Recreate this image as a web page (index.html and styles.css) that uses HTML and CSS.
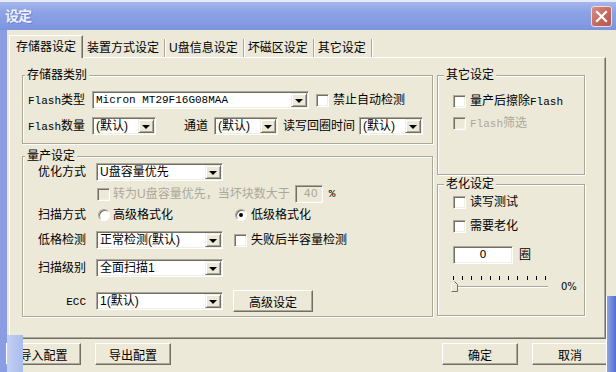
FILE: index.html
```html
<!DOCTYPE html>
<html>
<head>
<meta charset="utf-8">
<link rel="stylesheet" href="styles.css">
<title>设定</title>
</head>
<body>
<div class="titlebar">
    <span class="title">设定</span>
    <span class="close">
        <svg width="13" height="13" viewBox="0 0 13 13"><path d="M2 2 L11 11 M11 2 L2 11" stroke="#fff" stroke-width="2.2" stroke-linecap="square"/></svg>
    </span>
</div>
<div class="frame">
    <div class="tabs">
        <div class="tab active">存储器设定</div>
        <div class="tab">装置方式设定</div>
        <div class="tab">U盘信息设定</div>
        <div class="tab">坏磁区设定</div>
        <div class="tab">其它设定</div>
    </div>
    <div class="panel">
        <div class="col-left">
            <fieldset class="group g-type">
                <legend>存储器类别</legend>
                <div class="row">
                    <span class="lbl-a"><span class="lat">Flash</span>类型</span>
                    <div class="combo w-type"><span class="val lat">Micron MT29F16G08MAA</span><span class="drop"></span></div>
                    <span class="cb cb-gap"></span><span class="cb-text">禁止自动检测</span>
                </div>
                <div class="row row-2">
                    <span class="lbl-a"><span class="lat">Flash</span>数量</span>
                    <div class="combo w-s"><span class="val">(默认)</span><span class="drop"></span></div>
                    <span class="lbl-ch">通道</span>
                    <div class="combo w-s"><span class="val">(默认)</span><span class="drop"></span></div>
                    <span class="lbl-rw">读写回圈时间</span>
                    <div class="combo w-s"><span class="val">(默认)</span><span class="drop"></span></div>
                </div>
            </fieldset>
            <fieldset class="group g-mp">
                <legend>量产设定</legend>
                <div class="mp-grid">
                    <div class="row">
                        <span class="lbl-b">优化方式</span>
                        <div class="combo w-m"><span class="val">U盘容量优先</span><span class="drop"></span></div>
                    </div>
                    <div class="row sub">
                        <span class="cb off"></span>
                        <span class="dim conv">转为U盘容量优先，当坏块数大于</span>
                        <span class="field field-off">40</span>
                        <span class="pct">%</span>
                    </div>
                    <div class="row">
                        <span class="lbl-b">扫描方式</span>
                        <span class="radio r-first"></span><span class="cb-text r-text">高级格式化</span>
                        <span class="radio on r-second"></span><span class="cb-text">低级格式化</span>
                    </div>
                    <div class="row">
                        <span class="lbl-b">低格检测</span>
                        <div class="combo w-m"><span class="val">正常检测(默认)</span><span class="drop"></span></div>
                        <span class="cb cb-half"></span><span class="cb-text">失败后半容量检测</span>
                    </div>
                    <div class="row">
                        <span class="lbl-b">扫描级别</span>
                        <div class="combo w-m"><span class="val">全面扫描1</span><span class="drop"></span></div>
                    </div>
                    <div class="row">
                        <span class="lbl-b"><span class="lat">ECC</span></span>
                        <div class="combo w-m"><span class="val">1(默认)</span><span class="drop"></span></div>
                        <button class="btn btn-adv">高级设定</button>
                    </div>
                </div>
            </fieldset>
        </div>
        <div class="col-right">
            <fieldset class="group g-other">
                <legend>其它设定</legend>
                <div class="row">
                    <span class="cb"></span><span class="cb-text">量产后擦除<span class="lat">Flash</span></span>
                </div>
                <div class="row row-gap4">
                    <span class="cb off"></span><span class="cb-text dim"><span class="lat">Flash</span>筛选</span>
                </div>
            </fieldset>
            <fieldset class="group g-aging">
                <legend>老化设定</legend>
                <div class="row">
                    <span class="cb"></span><span class="cb-text">读写测试</span>
                </div>
                <div class="row row-gap6">
                    <span class="cb"></span><span class="cb-text">需要老化</span>
                </div>
                <div class="row row-loops">
                    <span class="field field-loops">0</span>
                    <span class="loops-unit">圈</span>
                </div>
                <div class="slider">
                    <div class="ticks">
                        <i></i><i></i><i></i><i></i><i></i><i></i><i></i><i></i><i></i><i></i><i></i>
                    </div>
                    <div class="slide-row">
                        <div class="track">
                            <svg class="thumb" width="7" height="11" viewBox="0 0 7 11">
                                <path d="M0.5 10.5 V3.5 L3.5 0.5 L6.5 3.5 V10.5 Z" fill="#ECE9D8" stroke="none"/>
                                <path d="M0.5 10.5 V3.5 L3.5 0.5" fill="none" stroke="#fff"/>
                                <path d="M3.5 0.5 L6.5 3.5 V10.5 H0.5" fill="none" stroke="#716F64"/>
                            </svg>
                        </div>
                        <span class="pct-value">0%</span>
                    </div>
                </div>
            </fieldset>
        </div>
    </div>
    <div class="footer">
        <button class="btn btn-foot btn-first">导入配置</button>
        <button class="btn btn-foot btn-gap">导出配置</button>
        <button class="btn btn-foot btn-ok">确定</button>
        <button class="btn btn-foot btn-gap">取消</button>
    </div>
</div>
<div class="shade-left"></div>
<div class="shade-right"></div>
</body>
</html>
```

FILE: styles.css
```css
body {
    margin: 0;
    width: 616px;
    height: 372px;
    overflow: hidden;
    position: relative;
    background: #ECE9D8;
    font-family: "Liberation Sans", "Noto Sans CJK SC", sans-serif;
    font-size: 12px;
    line-height: 14px;
    color: #000;
}

.lat {
    font-family: "Liberation Mono", monospace;
    font-size: 11px;
}

/* title bar */

.titlebar {
    height: 30px;
    box-sizing: border-box;
    display: flex;
    align-items: center;
    padding: 0 4px 0 5px;
    border-top: 2px solid #E6EBF8;
    background: linear-gradient(#A5B6EC, #8EA3E6 35%, #8399E2 80%, #7C93DE);
}

.title {
    color: #EEF2FC;
    font-size: 14px;
    font-weight: bold;
    letter-spacing: -1px;
    text-shadow: 1px 1px 0 #6C82CF;
}

.close {
    margin-left: auto;
    width: 21px;
    height: 21px;
    box-sizing: border-box;
    border: 1px solid #F3DCD8;
    border-radius: 3px;
    background: linear-gradient(135deg, #D88E84, #C2665C 60%, #B3574E);
    display: flex;
    align-items: center;
    justify-content: center;
}

/* client area */

.frame {
    border-left: 7px solid #8A9DE2;
    height: 342px;
    box-sizing: border-box;
    padding: 5px 0 0 2px;
}

.tabs {
    display: flex;
    align-items: flex-end;
    height: 22px;
}

.tab {
    height: 18px;
    line-height: 18px;
    padding: 0 5px 0 4px;
    border-right: 1px solid #ACA899;
    box-shadow: 1px 0 0 #fff;
}

.tab.active {
    position: relative;
    z-index: 1;
    height: 22px;
    line-height: 22px;
    margin-bottom: -1px;
    padding: 0 6px 0 6px;
    background: #ECE9D8;
    border-top: 1px solid #fff;
    border-left: 1px solid #fff;
    border-right: 1px solid #716F64;
    box-shadow: inset -1px 0 0 #ACA899;
}

.panel {
    width: 597px;
    height: 282px;
    box-sizing: border-box;
    display: flex;
    gap: 4px;
    padding: 10px 0 0 12px;
    border: 1px solid;
    border-color: #fff #716F64 #716F64 #fff;
    box-shadow: inset -1px -1px 0 #ACA899;
}

.col-left {
    width: 411px;
}

.col-right {
    width: 148px;
}

/* group boxes */

.group {
    margin: 0;
    border: 1px solid #ACA899;
    box-shadow: 1px 1px 0 #fff, inset 1px 1px 0 #fff;
    padding: 0 0 0 5px;
}

.group legend {
    padding: 0 2px;
    margin-left: -3px;
    line-height: 14px;
    background: #ECE9D8;
}

.g-type {
    padding-top: 9px;
    padding-bottom: 8px;
}

.g-mp {
    margin-top: 5px;
    padding-bottom: 4px;
}

.g-other,
.g-aging {
    padding-left: 15px;
}

.g-other legend,
.g-aging legend {
    margin-left: -9px;
}

.g-other {
    padding-top: 10px;
    padding-bottom: 42px;
}

.g-aging {
    margin-top: 2px;
    padding-top: 2px;
    padding-bottom: 22px;
}

.row {
    display: flex;
    align-items: center;
    height: 18px;
    white-space: nowrap;
}

.row-2 {
    margin-top: 8px;
}

.row-gap4 {
    margin-top: 4px;
}

.row-gap6 {
    margin-top: 6px;
}

.mp-grid {
    display: grid;
    grid-template-rows: 22px 21px 25px 28px 31px 22px;
    align-items: start;
}

.mp-grid .row:last-child {
    height: 22px;
}

.lbl-a {
    width: 64px;
}

.lbl-b {
    width: 58px;
    margin-right: 10px;
    text-align: right;
}

.lbl-ch {
    margin: 0 6px 0 28px;
}

.lbl-rw {
    margin: 0 4px 0 5px;
}

.dim {
    color: #ACA899;
}

/* combo boxes */

.combo {
    display: flex;
    align-items: center;
    height: 18px;
    box-sizing: border-box;
    background: #fff;
    border: 1px solid;
    border-color: #ACA899 #fff #fff #ACA899;
    box-shadow: inset 1px 1px 0 #716F64, inset -1px -1px 0 #F1EFE2;
    padding: 1px;
}

.combo .val {
    flex: 1;
    padding-left: 2px;
    overflow: hidden;
}

.drop {
    width: 16px;
    height: 14px;
    flex: none;
    box-sizing: border-box;
    background: #ECE9D8;
    border: 1px solid;
    border-color: #F1EFE2 #716F64 #716F64 #F1EFE2;
    box-shadow: inset 1px 1px 0 #fff, inset -1px -1px 0 #ACA899;
    display: flex;
    align-items: center;
    justify-content: center;
}

.drop::after {
    content: "";
    border-left: 4px solid transparent;
    border-right: 4px solid transparent;
    border-top: 4px solid #000;
    margin-top: 1px;
}

.w-type {
    width: 217px;
}

.w-s {
    width: 64px;
}

.w-m {
    width: 127px;
}

/* check boxes, radios, fields */

.cb {
    width: 13px;
    height: 13px;
    flex: none;
    box-sizing: border-box;
    background: #fff;
    border: 1px solid;
    border-color: #ACA899 #fff #fff #ACA899;
    box-shadow: inset 1px 1px 0 #716F64, inset -1px -1px 0 #F1EFE2;
}

.cb.off {
    background: #ECE9D8;
}

.cb-gap {
    margin-left: 7px;
}

.cb-text {
    margin-left: 4px;
}

.sub .cb {
    margin-left: 69px;
}

.conv {
    margin-left: 3px;
}

.field {
    height: 18px;
    box-sizing: border-box;
    background: #fff;
    border: 1px solid;
    border-color: #ACA899 #fff #fff #ACA899;
    box-shadow: inset 1px 1px 0 #716F64, inset -1px -1px 0 #F1EFE2;
    font-family: "DejaVu Sans", sans-serif;
    font-size: 11px;
    line-height: 16px;
}

.field-off {
    width: 28px;
    margin-left: 5px;
    background: #ECE9D8;
    color: #ACA899;
    text-align: right;
    padding-right: 4px;
}

.pct {
    margin-left: 6px;
    font-family: "Liberation Mono", monospace;
    font-size: 11px;
}

.radio {
    width: 12px;
    height: 12px;
    flex: none;
    box-sizing: border-box;
    border-radius: 50%;
    background: #fff;
    border: 1px solid;
    border-color: #ACA899 #fff #fff #ACA899;
    box-shadow: inset 1px 1px 0 #716F64;
    display: flex;
    align-items: center;
    justify-content: center;
}

.radio.on::after {
    content: "";
    width: 4px;
    height: 4px;
    border-radius: 50%;
    background: #000;
}

.r-first {
    margin-left: 2px;
}

.r-text {
    margin-left: 3px;
}

.r-second {
    margin-left: 62px;
}

.cb-half {
    margin-left: 11px;
}

.row-loops {
    margin-top: 11px;
}

.field-loops {
    width: 60px;
    text-align: center;
}

.loops-unit {
    margin-left: 6px;
}

/* slider */

.slider {
    margin-top: 12px;
    width: 125px;
}

.ticks {
    display: flex;
    justify-content: space-between;
    width: 93px;
    height: 4px;
}

.ticks i {
    width: 1px;
    height: 4px;
    background: #000;
}

.slide-row {
    display: flex;
    align-items: center;
    height: 12px;
    margin-top: 1px;
}

.track {
    position: relative;
    width: 95px;
    height: 2px;
    border-top: 1px solid #ACA899;
    border-bottom: 1px solid #fff;
    box-sizing: border-box;
    box-shadow: inset 0 1px 0 #716F64;
}

.thumb {
    position: absolute;
    left: -2px;
    top: -6px;
}

.pct-value {
    margin-left: 13px;
    font-family: "DejaVu Sans", sans-serif;
    font-size: 10px;
}

/* buttons */

.btn {
    height: 22px;
    box-sizing: border-box;
    padding: 0;
    font-family: "Noto Sans CJK SC", sans-serif;
    font-size: 12px;
    color: #000;
    background: #ECE9D8;
    border: 1px solid;
    border-color: #fff #716F64 #716F64 #fff;
    box-shadow: inset -1px -1px 0 #ACA899;
    border-radius: 0;
}

.btn-adv {
    width: 80px;
    margin-left: 10px;
}

.footer {
    display: flex;
    margin-top: 4px;
    padding-right: 8px;
}

.btn-foot {
    width: 76px;
}

.btn-first {
    margin-left: -3px;
    width: 75px;
}

.btn-gap {
    margin-left: 14px;
}

.btn-ok {
    margin-left: auto;
}

/* bits of neighbouring windows over the edges */

.shade-left {
    position: absolute;
    left: 7px;
    top: 335px;
    width: 16px;
    height: 37px;
    background: linear-gradient(to right, #C3D0F2, #A9BCEC);
}

.shade-right {
    position: absolute;
    left: 606px;
    top: 296px;
    width: 10px;
    height: 76px;
    background: linear-gradient(to right, #fff 0 1px, #8EA4E6 1px, #4E6FD2);
}
```
